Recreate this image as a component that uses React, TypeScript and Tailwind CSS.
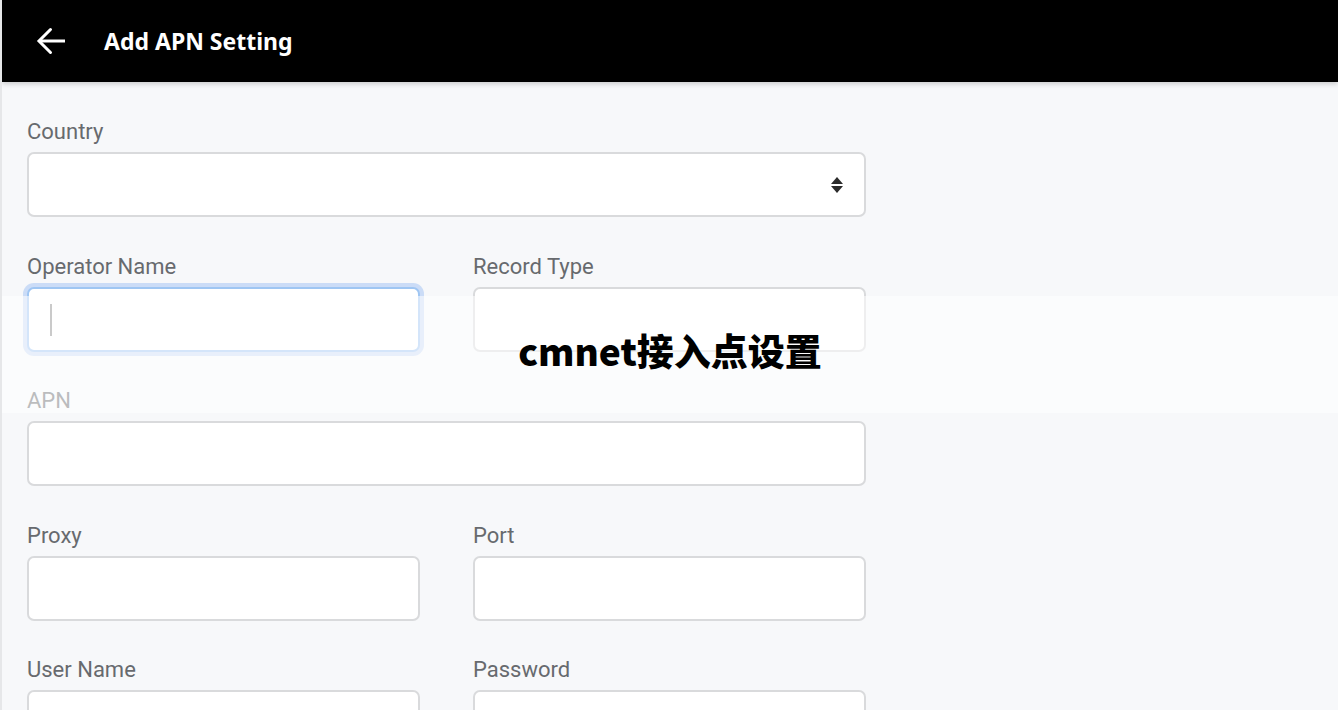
import React from "react";

const labelFont = { fontFamily: "Roboto, 'Liberation Sans', sans-serif" };

function Field({ label, focused, wide }: { label: string; focused?: boolean; wide?: boolean }) {
  return (
    <div className={wide ? "col-span-2 flex flex-col" : "flex flex-col"}>
      <label className="h-[30px] leading-[30px] text-[22px] text-[#676a6e] mb-[5px]" style={labelFont}>
        {label}
      </label>
      {focused ? (
        <div className="relative h-[65px] rounded-[7px] bg-white border-2 border-[#9fc6f3] shadow-[0_0_0_4px_rgba(120,170,240,0.35)]">
          <div className="absolute left-[21px] top-[15px] w-[2px] h-[32px] bg-[#8a8a8a]" />
        </div>
      ) : (
        <div className="h-[65px] rounded-[7px] bg-white border-2 border-[#d9dadc]" />
      )}
    </div>
  );
}

export default function App() {
  return (
    <div className="relative w-[1338px] h-[710px] overflow-hidden bg-[#f7f8fa] border-l-2 border-[#e6e7e9]">
      <header className="relative z-10 h-[82px] bg-black flex items-center shadow-[0_2px_5px_rgba(0,0,0,0.18)]">
        <svg className="ml-[33px]" width="31" height="30" viewBox="0 0 31 30" fill="none" stroke="white" strokeWidth="3">
          <path d="M30 15H4" />
          <path d="M15.5 3.5L4 15l11.5 11.5" strokeLinecap="round" strokeLinejoin="miter" />
        </svg>
        <h1 className="ml-[38px] text-white text-[23px] font-bold" style={{ fontFamily: "'Noto Sans', 'Open Sans', sans-serif" }}>
          Add APN Setting
        </h1>
      </header>

      <div className="pl-[25px] pt-[35px] w-[864px]">
        <div className="grid grid-cols-2 gap-x-[53px] gap-y-[34.5px]">
          <div className="col-span-2 flex flex-col">
            <label className="h-[30px] leading-[30px] text-[22px] text-[#676a6e] mb-[5px]" style={labelFont}>
              Country
            </label>
            <div className="h-[65px] rounded-[7px] bg-white border-2 border-[#d9dadc] flex items-center justify-end pr-[20px]">
              <svg width="14" height="20" viewBox="0 0 14 20">
                <path d="M7 2L13 9H1Z" fill="#2b2b2b" />
                <path d="M7 18L13 11H1Z" fill="#2b2b2b" />
              </svg>
            </div>
          </div>
          <Field label="Operator Name" focused />
          <Field label="Record Type" />
          <Field label="APN" wide />
          <Field label="Proxy" />
          <Field label="Port" />
          <Field label="User Name" />
          <Field label="Password" />
        </div>
      </div>

      <div className="absolute left-0 right-0 top-[296px] h-[117px] bg-white/55 z-20 flex items-center justify-center">
        <span
          className="text-black text-[37px] font-black leading-none mt-[-9px]"
          style={{ fontFamily: "'Noto Sans CJK SC', 'Noto Sans', sans-serif" }}
        >
          cmnet接入点设置
        </span>
      </div>
    </div>
  );
}
